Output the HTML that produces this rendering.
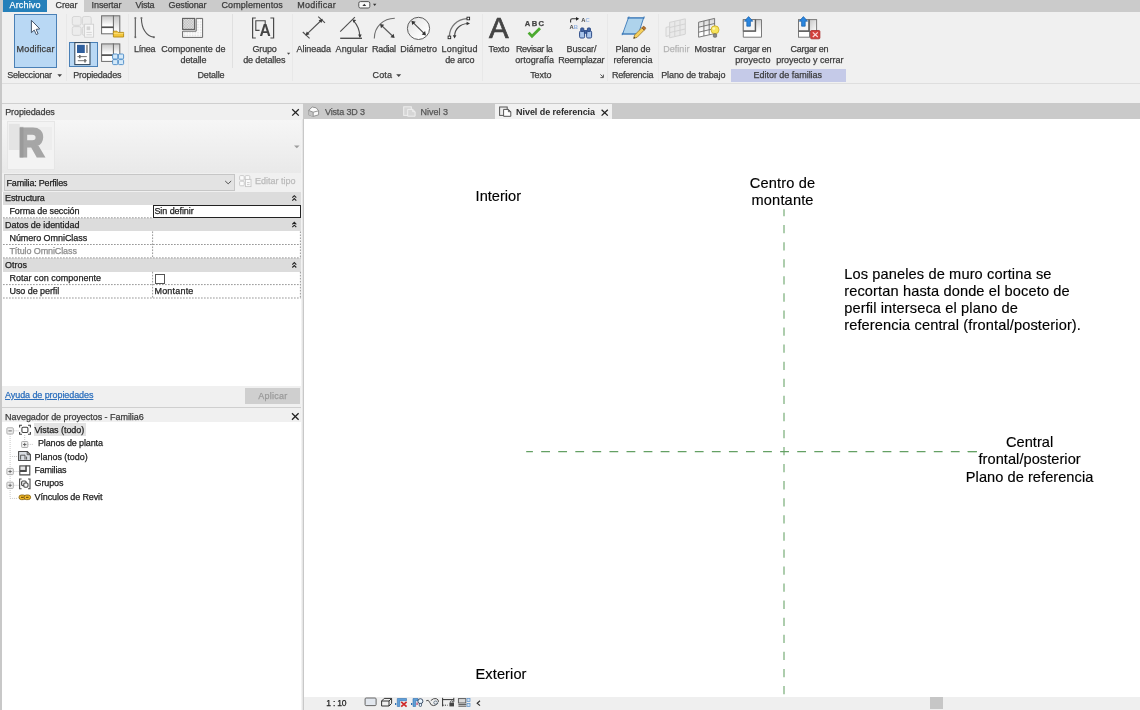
<!DOCTYPE html>
<html lang="es"><head><meta charset="utf-8"><title>Revit - Nivel de referencia</title>
<style>
html,body{margin:0;padding:0;}
body{width:1140px;height:710px;overflow:hidden;background:#f0f0f0;font-family:"Liberation Sans",sans-serif;font-size:9.0px;color:#3c3c3c;position:relative;}
.a{position:absolute;}
.t{position:absolute;white-space:nowrap;line-height:11px;-webkit-text-stroke:0.25px currentColor;}
svg{position:absolute;overflow:visible;}
.cv{position:absolute;white-space:nowrap;font-size:14.6px;line-height:17.15px;color:#000;-webkit-text-stroke:.15px #000;transform:translateY(.4px);font-family:"Liberation Sans",sans-serif;}
.dash{position:absolute;border-top:1px dashed #bbb;height:0;}
</style></head><body><div id="root" style="position:absolute;left:0;top:0;width:1140px;height:710px;will-change:transform;">
<!-- menu bar -->
<div class="a" style="left:0;top:0;width:1140px;height:12px;background:#cbcbcb;"></div>
<div class="a" style="left:3px;top:0;width:44.4px;height:11.6px;background:#2580ba;"></div>
<div class="a" style="left:47.4px;top:0;width:36.6px;height:12px;background:#f0f0f0;"></div>
<!-- ribbon -->
<div class="a" style="left:0;top:12px;width:1140px;height:71px;background:#f0f0f0;"></div>
<div class="a" style="left:0;top:82.600px;width:1140px;height:1px;background:#dedede;"></div>
<div class="a" style="left:0;top:84px;width:1140px;height:19px;background:#f0f0f0;"></div>
<div class="a" style="left:0;top:102.6px;width:1140px;height:1.2px;background:#cfcfcf;"></div>
<!-- ribbon separators -->
<div class="a" style="left:66px;top:14px;width:1px;height:67px;background:#e8e8e8;"></div>
<div class="a" style="left:128px;top:14px;width:1px;height:67px;background:#e8e8e8;"></div>
<div class="a" style="left:231.5px;top:14px;width:1px;height:54px;background:#e0e0e0;"></div>
<div class="a" style="left:292.4px;top:14px;width:1px;height:67px;background:#e8e8e8;"></div>
<div class="a" style="left:482.4px;top:14px;width:1px;height:67px;background:#e8e8e8;"></div>
<div class="a" style="left:607px;top:14px;width:1px;height:67px;background:#e8e8e8;"></div>
<div class="a" style="left:657.6px;top:14px;width:1px;height:67px;background:#e8e8e8;"></div>
<!-- modificar button -->
<div class="a" style="left:14px;top:14px;width:43px;height:53.6px;box-sizing:border-box;background:#b9d8f4;border:1px solid #4a80b6;"></div>
<div class="a" style="left:69px;top:41.6px;width:29px;height:25px;box-sizing:border-box;background:#b9d8f4;border:1px solid #4a80b6;"></div>
<div class="a" style="left:730.6px;top:68.6px;width:115px;height:13px;background:#c5cae8;"></div>
<!-- left strip -->
<div class="a" style="left:0;top:12px;width:2.4px;height:698px;background:#c8c8c8;"></div>
<!-- properties palette -->
<div class="a" style="left:2.4px;top:104px;width:300px;height:16px;background:#f0f0f0;"></div>
<div class="a" style="left:2.4px;top:119.6px;width:300px;height:53px;background:linear-gradient(#f6f6f6,#e9e9e9);"></div>
<div class="a" style="left:6.6px;top:121px;width:48.4px;height:49px;box-sizing:border-box;background:#f3f3f3;border:1px solid #e6e6e6;"></div>
<div class="a" style="left:2.4px;top:172.6px;width:300px;height:19px;background:#f0f0f0;"></div>
<div class="a" style="left:4px;top:174px;width:230.700px;height:16.600px;box-sizing:border-box;background:#e3e3e3;border:1px solid #c6c6c6;"></div>
<div class="a" style="left:2.4px;top:191.5px;width:300px;height:194.3px;background:#fff;"></div>
<div class="a" style="left:3px;top:191.5px;width:297.7px;height:13px;background:#dcdcdc;"></div>
<div class="a" style="left:3px;top:218px;width:297.7px;height:13.3px;background:#dcdcdc;"></div>
<div class="a" style="left:3px;top:258.4px;width:297.7px;height:13.3px;background:#dcdcdc;"></div>
<div class="a" style="left:152.9px;top:205.2px;width:147.8px;height:12.6px;box-sizing:border-box;border:1.2px solid #222;background:#fff;"></div>
<div class="a" style="left:155px;top:274.4px;width:9.6px;height:9.4px;box-sizing:border-box;border:1px solid #555;background:#fff;"></div>
<div class="a" style="left:2.4px;top:385.8px;width:300px;height:21px;background:#f0f0f0;"></div>
<div class="a" style="left:245px;top:388.4px;width:55px;height:15.2px;background:#cfcfcf;"></div>
<div class="a" style="left:2.4px;top:406.5px;width:300px;height:1.2px;background:#cfcfcf;"></div>
<!-- project browser -->
<div class="a" style="left:2.4px;top:407.7px;width:300px;height:14.6px;background:#f0f0f0;"></div>
<div class="a" style="left:2.4px;top:422.3px;width:300px;height:288px;background:#fff;"></div>
<div class="a" style="left:33.5px;top:423.3px;width:52.8px;height:12.4px;background:#e3e3e3;"></div>
<!-- divider -->
<div class="a" style="left:300.800px;top:119.200px;width:3.300px;height:591px;background:linear-gradient(90deg,#ffffff 0,#eeeeee 22%,#e2e2e2 62%,#c9c9c9 70%,#c7c7c7 100%);"></div>
<div class="a" style="left:302.600px;top:104px;width:1.500px;height:16px;background:#c8c8c8;"></div>
<!-- tab bar -->
<div class="a" style="left:303px;top:102.800px;width:837px;height:16.400px;background:#cacaca;"></div>
<div class="a" style="left:495.300px;top:104.100px;width:116.700px;height:15.100px;background:#f1f1f1;"></div>
<!-- canvas -->
<div class="a" style="left:304px;top:119.2px;width:836px;height:578px;background:#fff;"></div>
<div class="a" style="left:305px;top:696.600px;width:835px;height:14px;background:#efefef;"></div>
<div class="a" style="left:930.2px;top:697px;width:13.2px;height:11.6px;background:#c6c6c6;"></div>
<svg style="left:0;top:0;" width="1140" height="710" viewBox="0 0 1140 710">
 <g stroke="#64a064" stroke-width="1.050" fill="none">
  <path d="M784 209.300V696.600" stroke-dasharray="8.300 8.770" stroke-dashoffset="1.300"/>
  <path d="M526.200 451.600H977" stroke-dasharray="8.800 8.270" stroke-dashoffset="2.100"/>
  <path d="M967.500 451.600H977"/>
 </g>
</svg>
<div class="cv" style="left:475.600px;top:188.200px;">Interior</div>
<div class="cv" style="left:475.500px;top:665.500px;letter-spacing:.1px;">Exterior</div>
<div class="cv" style="left:732.600px;top:175.200px;width:100px;text-align:center;letter-spacing:.16px;">Centro de<br>montante</div>
<div class="cv" style="left:844.200px;top:265.500px;letter-spacing:.125px;">Los paneles de muro cortina se<br>recortan hasta donde el boceto de<br>perfil interseca el plano de<br>referencia central (frontal/posterior).</div>
<div class="cv" style="left:939.600px;top:434.300px;width:180px;text-align:center;letter-spacing:.05px;">Central<br>frontal/posterior<br>Plano de referencia</div>
<svg style="left:0;top:0;" width="1140" height="710" viewBox="0 0 1140 710" font-family="Liberation Sans, sans-serif">
<defs>
 <linearGradient id="gw" x1="0" y1="0" x2="0" y2="1"><stop offset="0" stop-color="#c6c6c6"/><stop offset=".85" stop-color="#fdfdfd"/></linearGradient>
 <linearGradient id="gw2" x1="0" y1="0" x2="1" y2="1"><stop offset="0" stop-color="#e0e0e0"/><stop offset=".8" stop-color="#ffffff"/></linearGradient>
 <linearGradient id="gb" x1="0" y1="0" x2="0" y2="1"><stop offset="0" stop-color="#3c8ee6"/><stop offset="1" stop-color="#1668c4"/></linearGradient>
 <pattern id="hatch" width="1.6" height="1.6" patternUnits="userSpaceOnUse"><rect width="1.6" height="1.6" fill="#ececec"/><rect width=".8" height=".8" fill="#b4b4b4"/><rect x=".8" y=".8" width=".8" height=".8" fill="#b4b4b4"/></pattern>
 <pattern id="dots" width="1.6" height="1.6" patternUnits="userSpaceOnUse"><rect width="1.6" height="1.6" fill="#fbfbfb"/><rect width=".8" height=".8" fill="#dedede"/></pattern>
</defs>
<!-- cursor -->
<path d="M31.4 20.3V32.7L34.2 30.1L36.3 34.6L38.1 33.7L36.1 29.4L39.8 28.9Z" fill="#fff" stroke="#44546a" stroke-width="1" stroke-linejoin="round"/>
<!-- select arrow -->
<path d="M57.4 74.3h4.6l-2.3 2.6z" fill="#444"/>
<path d="M396.2 74.3h5l-2.5 2.6z" fill="#444"/>
<path d="M287 52.8h3.2l-1.6 1.9z" fill="#444"/>
<!-- icon A greyed family types -->
<g fill="#ececec" stroke="#d2d2d2" stroke-width=".9">
 <rect x="72.3" y="16.5" width="8.8" height="8.8" rx="1.8"/><rect x="82.4" y="16.5" width="8.8" height="8.8" rx="1.8"/>
 <rect x="72.3" y="26.6" width="8.8" height="8.8" rx="1.8"/><rect x="82.4" y="26.6" width="8.8" height="8.8" rx="1.8"/>
 <rect x="84.6" y="24.2" width="9" height="13" fill="#f6f6f6" stroke="#cfcfcf"/>
 <rect x="86.6" y="26.4" width="3.6" height="3.8" fill="#d4d4d4" stroke="none"/>
 <path d="M86.4 32.4h5.4M86.4 34.8h5.4" stroke="#d0d0d0"/>
</g>
<!-- icon B family category -->
<g stroke="#6c6c6c" stroke-width="1">
 <rect x="113.2" y="15.8" width="6.6" height="18" fill="url(#gw)"/>
 <rect x="101.6" y="27.2" width="11.8" height="6.6" fill="#fff"/>
 <rect x="101.6" y="15.8" width="11.8" height="11.2" fill="url(#gw)"/>
 <path d="M101.6 27.4h11.8" stroke="#505050" stroke-width="1.400"/>
</g>
<path d="M113.4 31.2h3.6l1 1.2h5.6v4.6h-10.2z" fill="#f3c63b" stroke="#b48a12" stroke-width=".9" stroke-linejoin="round"/>
<path d="M113.6 33.4h9.8" stroke="#fbe38c" stroke-width=".8"/>
<!-- properties icon -->
<rect x="74.8" y="42.6" width="15.2" height="22" fill="#fff" stroke="#34495e" stroke-width="1.1"/>
<rect x="77" y="44.8" width="7.8" height="8.2" fill="#2f5f9e"/>
<rect x="86" y="44.8" width="1.9" height="8.2" fill="#9a9a9a"/>
<path d="M77.400 56.600h9.400M77.800 60.700h9" stroke="#666" stroke-width=".9"/>
<path d="M79.800 55v3.200M85 59v3.400" stroke="#666" stroke-width="1.500" fill="none"/>
<!-- icon D family types -->
<g stroke="#6c6c6c" stroke-width="1">
 <rect x="113.2" y="43.9" width="6.6" height="11" fill="url(#gw)"/>
 <rect x="101.6" y="55" width="11.8" height="6.4" fill="#fff"/>
 <rect x="101.6" y="43.9" width="11.8" height="11" fill="url(#gw)"/>
 <path d="M101.6 55.2h11.8" stroke="#505050" stroke-width="1.400"/>
</g>
<g fill="#d4e9f9" stroke="#4a8ac6" stroke-width=".9">
 <rect x="112.6" y="54" width="5.2" height="5" rx="1"/><rect x="118.4" y="54" width="5.2" height="5" rx="1"/>
 <rect x="112.6" y="59.6" width="5.2" height="5" rx="1"/><rect x="118.4" y="59.6" width="5.2" height="5" rx="1"/>
</g>
<!-- Linea -->
<g stroke="#555" stroke-width="1.1" fill="none">
 <path d="M135.3 18.4V37"/>
 <path d="M141.4 18.4C141.6 28 146 36.4 153.6 37.1"/>
</g>
<g fill="#666"><rect x="134.5" y="17.2" width="1.7" height="1.7"/><rect x="134.5" y="36.4" width="1.7" height="1.7"/><rect x="140.6" y="17.2" width="1.7" height="1.7"/><rect x="153" y="36.3" width="1.8" height="1.8"/></g>
<!-- Componente de detalle -->
<path d="M196.200 18.400h6.400v19h-20v-6.200h13.600z" fill="url(#dots)" stroke="#686868" stroke-width="1"/>
<rect x="182.600" y="18.400" width="12" height="11" fill="url(#hatch)" stroke="#5e5e5e" stroke-width="1.100"/>
<!-- Grupo de detalles -->
<g stroke="#4a4a4a" stroke-width="1.2" fill="none">
 <path d="M255.8 18h-3.2v20h3.2"/>
 <path d="M270.4 18h3.2v20h-3.2"/>
 <path d="M259.6 30.4h-3.8v-9.7h9.4v3.6" stroke-width="1.1"/>
</g>
<text x="259.4" y="35.8" font-size="15.6" font-weight="bold" fill="#444">A</text>
<!-- Alineada -->
<g stroke="#4f4f4f" stroke-width="1.1" fill="none">
 <path d="M306.6 34.4L321.6 20"/>
 <path d="M302.8 32l6.8 6.4M318.2 16.6l6.8 6.2"/>
</g>
<path d="M305.4 35.6l4.2-1.4-2.8-2.8zM322.8 18.8l-4.2 1.4 2.8 2.8z" fill="#3c3c3c"/>
<!-- Angular -->
<g stroke="#4f4f4f" fill="none">
 <path d="M340.2 38.3H362" stroke-width="1.4"/>
 <path d="M340.2 31.6L354.9 17.2" stroke-width="1.1"/>
 <path d="M353.4 20.6C357.6 25 359.8 31 359.9 37" stroke-width="1.1"/>
</g>
<path d="M352.4 19.4l3.8.6-2.6 2.8zM359.9 38l-1.8-3.6h3.6z" fill="#3c3c3c"/>
<!-- Radial -->
<g stroke="#5a5a5a" fill="none" stroke-width="1.1">
 <path d="M374.3 38.4C374.3 27 383 18.4 394.8 18.2" stroke="#6e6e6e"/>
 <path d="M381 25L393.6 37"/>
</g>
<path d="M380 24l4.2.8-3.2 3.4zM394.6 38l-4.2-.8 3.2-3.4z" fill="#3c3c3c"/>
<!-- Diametro -->
<circle cx="418.500" cy="28.400" r="11.100" fill="url(#gw2)" stroke="#5c5c5c" stroke-width="1"/>
<path d="M412.4 21.8L424.8 34.2" stroke="#444" stroke-width="1.1"/>
<path d="M411.4 20.8l4.3.9-3.4 3.4zM426 35.4l-4.3-.9 3.4-3.4z" fill="#333"/>
<!-- Longitud de arco -->
<g fill="none" stroke-width="1.1">
 <path d="M449.400 36.200C449.600 26.600 457 19 467.200 18.600" stroke="#777" stroke-width="1.300"/>
 <path d="M454.6 35.6C455 29 460 24 467.6 23.5" stroke="#4a4a4a"/>
</g>
<path d="M454.6 38.6l-1.8-3.4h3.6zM470 23.5l-3.4 1.8v-3.6z" fill="#333"/>
<rect x="448.1" y="36.1" width="2.6" height="2.6" fill="#fff" stroke="#222" stroke-width=".9"/>
<rect x="467" y="17.2" width="2.6" height="2.6" fill="#fff" stroke="#222" stroke-width=".9"/>
<!-- Texto A -->
<text x="489" y="38.300" font-size="29.400" fill="#444" stroke="#444" stroke-width=".7">A</text>
<!-- ABC check -->
<text x="524.800" y="25.900" font-size="7.600" font-weight="bold" fill="#444" stroke="#444" stroke-width=".25" letter-spacing="1.400">ABC</text>
<path d="M528.6 32.6l3.4 3.6L540 28.2" fill="none" stroke="#4caa30" stroke-width="2.8" stroke-linejoin="miter"/>
<!-- Buscar/Reemplazar -->
<path d="M570.6 22.6V20.4q0-1.6 1.6-1.6h4.6" fill="none" stroke="#333" stroke-width="1.1"/>
<path d="M579.2 18.8l-3.2-1.9v3.8z" fill="#222"/>
<text x="581.2" y="22.1" font-size="5.8" font-weight="bold" fill="#444">A<tspan fill="#9ab8e4">C</tspan></text>
<text x="569.6" y="28.7" font-size="5.8" font-weight="bold" fill="#444">A<tspan fill="#8fb0e0">B</tspan></text>
<g stroke="#2c4a86" stroke-width="1" fill="#a8c4ea">
 <rect x="579.6" y="31" width="5" height="7" rx="1.2"/><rect x="586.6" y="31" width="5" height="7" rx="1.2"/>
 <rect x="580.8" y="28" width="3" height="3.4" rx=".6" fill="#4468a8"/><rect x="587.4" y="28" width="3" height="3.4" rx=".6" fill="#4468a8"/>
 <rect x="584.4" y="30.6" width="2.4" height="2.6" fill="#4468a8"/>
</g>
<!-- dialog launcher -->
<path d="M600.4 74.4l2.4 2.4M603.4 74.6v3h-3" fill="none" stroke="#444" stroke-width=".9"/>
<!-- Plano de referencia -->
<path d="M628.400 17.900H643.600L638.400 34H622.600Z" fill="#aed3ec" stroke="#3a78b8" stroke-width=".9"/>
<path d="M627.2 17.9h17.4M621.6 34h17.6M629 16.4l-.8 2.6M644.2 16.4l-.8 2.6M623 32.6l-.8 2.6" stroke="#3a78b8" stroke-width=".9" fill="none"/>
<path d="M633.6 38.4l1-3.4 7.2-7.2 2.4 2.4-7.2 7.2z" fill="#f6d05c" stroke="#8a6a28" stroke-width=".7" stroke-linejoin="round"/>
<path d="M641.8 27.8l1.2-1.2q.8-.6 1.6.2l.8.8q.6.8 0 1.400l-1.200 1.200z" fill="#b5722c" stroke="#7a4a18" stroke-width=".6"/>
<path d="M633.600 38.400l.5-1.700 1.200 1.200z" fill="#333"/>
</svg>

<svg style="left:0;top:0;" width="1140" height="710" viewBox="0 0 1140 710" font-family="Liberation Sans, sans-serif">
<!-- Definir (greyed) -->
<g stroke="#d0d0d0" stroke-width=".9" fill="#e9e9e9">
 <path d="M669.6 22.4L685.300 18.800V34.200L669.600 37.800Z"/>
 <path d="M669.6 27.500l15.700-3.600M669.600 32.600l15.700-3.600M674.800 21.200v15.400M680 20v15.400" fill="none"/>
 <path d="M666 27.400l3.600-.8v9l-3.600.8z" fill="#ededed"/>
</g>
<!-- Mostrar -->
<defs><linearGradient id="gm" x1="0" y1="0" x2="0" y2="1"><stop offset="0" stop-color="#d6d6d6"/><stop offset=".8" stop-color="#ffffff"/></linearGradient></defs>
<g stroke="#666" stroke-width=".85" fill="url(#gm)">
 <path d="M698.600 22.200L714.600 18.400V33.600L698.600 37.200Z"/>
 <path d="M698.600 27.200l16-3.700M698.600 32.200l16-3.700M703.900 21v15M709.200 19.700v15" fill="none"/>
</g>
<circle cx="715" cy="29.800" r="4" fill="#f7e45a" stroke="#c9a820" stroke-width=".8"/>
<circle cx="713.800" cy="28.600" r="1.400" fill="#fdf6b0"/>
<rect x="713.400" y="33.800" width="3.200" height="3.400" rx=".6" fill="#8a8a8a" stroke="#555" stroke-width=".6"/>
<!-- Cargar en proyecto -->
<defs><linearGradient id="gl" x1="0" y1="0" x2="1" y2="1"><stop offset="0" stop-color="#c4c4c4"/><stop offset="1" stop-color="#ffffff"/></linearGradient></defs>
<defs><linearGradient id="gl2" x1="0" y1="0" x2="0" y2="1"><stop offset="0" stop-color="#cdcdcd"/><stop offset=".7" stop-color="#ffffff"/></linearGradient></defs>
<path d="M743.300 19.600H761.500V37.200H743.300Z" fill="url(#gl2)" stroke="#7a7a7a" stroke-width="1"/>
<rect x="743.300" y="19.600" width="12" height="11.400" fill="#f4f4f4" stroke="#777" stroke-width="1"/>
<path d="M743.300 31.200h12.200V19.600" stroke="#5a5a5a" stroke-width="1.300" fill="none"/>
<path d="M748.600 16.600l4.200 4.600h-2.400v5h-3.600v-5h-2.400z" fill="#2a86e0" stroke="#145ca8" stroke-width=".7" stroke-linejoin="round"/>
<!-- Cargar y cerrar -->
<rect x="808.800" y="19.600" width="7.800" height="12" fill="url(#gl)" stroke="#7a7a7a" stroke-width="1"/>
<rect x="798.500" y="31.200" width="11" height="6" fill="#fff" stroke="#7a7a7a" stroke-width="1"/>
<rect x="798.500" y="19.600" width="10.400" height="11.400" fill="#f4f4f4" stroke="#777" stroke-width="1"/>
<path d="M798.500 31.200h10.600V19.600" stroke="#5a5a5a" stroke-width="1.300" fill="none"/>
<path d="M803.400 16.600l4.200 4.600h-2.400v5h-3.600v-5h-2.400z" fill="#2a86e0" stroke="#145ca8" stroke-width=".7" stroke-linejoin="round"/>
<rect x="810.600" y="30.500" width="9.300" height="8.300" rx="1" fill="#d4403c" stroke="#a82a2a" stroke-width=".8"/>
<path d="M812.800 32.400l5 4.600M817.800 32.400l-5 4.600" stroke="#fbdada" stroke-width="1.200"/>
<!-- property grid dashes -->
<g stroke="#999" stroke-width="1" stroke-dasharray="1.700 1.300" fill="none">
 <path d="M3 217.800H152.900M3 244.500H300.700M3 257.900H300.700M3 284.600H300.700M3 298H300.700"/>
 <path d="M152.600 231.400V257.900M152.600 271.800V298M300.400 231.400V257.900M300.400 271.800V298"/>
</g>
<!-- Properties header close -->
<path d="M292.200 109.200l6.600 6.400M298.800 109.200l-6.600 6.400" stroke="#222" stroke-width="1.300"/>
<path d="M292 413.300l6.600 6.400M298.600 413.300l-6.600 6.400" stroke="#222" stroke-width="1.300"/>
<path d="M294 145.500h5.600l-2.800 2.800z" fill="#9c9c9c"/>
<!-- Revit R -->
<path d="M8.800 123.800H19.800V150H8.800Z" fill="#e4e4e4"/>
<path d="M19.800 127H52V150H19.800Z" fill="#ededed"/>
<text transform="translate(18.400 156.400) scale(.9 1)" font-size="39" font-weight="bold" fill="#a6a6a6" stroke="#a6a6a6" stroke-width="2.800" stroke-linejoin="miter">R</text>
<path d="M19.800 126.800h3.600V157.600h-3.600z" fill="#8e8e8e" opacity=".5"/>
<!-- dropdown chevron -->
<path d="M225.200 181l3 2.800 3-2.800" fill="none" stroke="#505050" stroke-width="1"/>
<!-- edit type icon -->
<g fill="#fbfbfb" stroke="#c6c6c6" stroke-width=".9">
 <rect x="239.600" y="175.600" width="4.600" height="4.600" rx="1"/><rect x="245.200" y="175.600" width="4.600" height="4.600" rx="1"/>
 <rect x="239.600" y="181.200" width="4.600" height="4.600" rx="1"/>
 <rect x="245.400" y="179.400" width="5.600" height="7.200"/>
 <path d="M247 182.600h2.600M247 184.600h2.600" fill="none"/>
</g>
<!-- group collapse chevrons -->
<g fill="none" stroke="#222" stroke-width="1.100">
 <path d="M292.300 197.700l2-2 2 2M292.300 200.600l2-2 2 2"/>
 <path d="M292.300 224.300l2-2 2 2M292.300 227.200l2-2 2 2"/>
 <path d="M292.300 264.600l2-2 2 2M292.300 267.500l2-2 2 2"/>
</g>
<!-- tree lines -->
<g stroke="#c8c8c8" stroke-width="1" stroke-dasharray="1 1" fill="none">
 <path d="M10.100 434V498.400"/>
 <path d="M13.600 430.800h5M10.100 456.500h8M13.600 471.500h5M13.600 485.300h5M10.100 498.400h8"/>
 <path d="M24.700 435v6.600M27.800 444.400h6"/>
</g>
<g fill="#f0f0f0" stroke="#a6a6a6" stroke-width=".9">
 <rect x="6.900" y="427.800" width="6.400" height="6.200" rx=".8"/>
 <rect x="21.600" y="441.500" width="6.200" height="6" rx=".8"/>
 <rect x="6.900" y="468.400" width="6.400" height="6.200" rx=".8"/>
 <rect x="6.900" y="482.200" width="6.400" height="6.200" rx=".8"/>
</g>
<g stroke="#5e5e5e" stroke-width=".9" fill="none">
 <path d="M8.400 430.900h3.400"/>
 <path d="M23 444.500h3.400M24.700 442.800v3.400"/>
 <path d="M8.400 471.500h3.400M10.100 469.800v3.400"/>
 <path d="M8.400 485.300h3.400M10.100 483.600v3.400"/>
</g>
<!-- views icon -->
<g stroke="#444" stroke-width="1.100" fill="none">
 <path d="M19.600 427.400v-2.200h2.400M28 425.200h2.400v2.200M30.400 432v2.200h-2.400M22 434.200h-2.400v-2.200"/>
 <rect x="21.900" y="427.300" width="6" height="5.200" rx="1.200"/>
</g>
<!-- sheets icon -->
<path d="M18.600 451.500h8.600l3.200 3.200v5.800h-11.800z" fill="#d9dde2" stroke="#4a4a4a" stroke-width="1.100" stroke-linejoin="round"/>
<path d="M27.200 451.500v3.200h3.200" fill="none" stroke="#4a4a4a" stroke-width=".9"/>
<path d="M20.600 459.600v-4.400h4.400v4.400M26.600 459.600v-3" fill="none" stroke="#4a4a4a" stroke-width=".9"/>
<!-- families icon -->
<g stroke="#4a4a4a" stroke-width="1.100" fill="#fff">
 <path d="M26.200 465.900h3.600v9h-10v-3.400h6.400z"/>
 <rect x="19.800" y="465.900" width="6" height="4.600" fill="#e4e4e4"/>
</g>
<!-- groups icon -->
<g stroke="#4a4a4a" stroke-width="1.100" fill="none">
 <path d="M21.600 479h-2v9.800h2M28 479h2v9.800h-2"/>
 <rect x="21.600" y="481" width="4.600" height="4.600" rx="1.200" fill="#e8e8e8"/>
 <rect x="23.800" y="483" width="4.200" height="4.200" rx="1.200" fill="#f6f6f6"/>
</g>
<!-- link icon -->
<g stroke="#8a6410" stroke-width=".9" fill="#f2b826">
 <rect x="19" y="495" width="6.600" height="4.600" rx="2.300"/><rect x="24" y="495" width="6.600" height="4.600" rx="2.300"/>
</g>
<path d="M21 497.300h2.600M26 497.300h2.600" stroke="#5a4008" stroke-width="1"/>
<!-- tab icons -->
<path d="M308.600 110.400l3.600-3.400 4 .8 2.400 3v4l-5.400 1.600-4.600-1.600z" fill="#fafafa" stroke="#8a8a8a" stroke-width=".9" stroke-linejoin="round"/>
<path d="M308.600 110.400l4.600 1.800v4.200l-4.600-1.600z" fill="#c4c4c4" stroke="none"/>
<path d="M308.600 110.400l4.600 1.800 5.400-1.400M313.200 112.200v4.200" fill="none" stroke="#8a8a8a" stroke-width=".9"/>
<g fill="#d6d6d6" stroke="#efefef" stroke-width="1">
 <rect x="403.700" y="106.800" width="7.600" height="8.600"/>
 <path d="M407.700 109.400h5l2.400 2.300v4.500h-7.400z"/>
 <path d="M412.700 109.400v2.300h2.400" fill="none"/>
</g>
<g fill="#fff" stroke="#555" stroke-width="1">
 <rect x="499.600" y="107" width="7.600" height="8.400" fill="#ececec"/>
 <path d="M503.600 109.400h4.800l2.400 2.300v4.600h-7.200z"/>
 <path d="M508.400 109.400v2.300h2.400" fill="none"/>
</g>
<path d="M601.600 109.800l6.200 5.800M607.800 109.800l-6.200 5.800" stroke="#222" stroke-width="1.300"/>
<!-- view control bar icons -->
<rect x="365.100" y="698" width="11" height="7.600" rx="1" fill="#e2e7ee" stroke="#666" stroke-width="1"/>
<g fill="none" stroke="#333" stroke-width="1">
 <path d="M381.600 701h7.400v5h-7.400zM381.600 701l2.600-2.600h7.400l-2.600 2.600M391.600 698.400v5l-2.600 2.600"/>
</g>
<path d="M397.300 706.500v-8h9.200v2.200h-6.800v5.800z" fill="#5f9fd8" stroke="#2f6fb0" stroke-width=".6"/>
<rect x="395" y="703" width="1.300" height="2" fill="#2f6fb0"/>
<path d="M401.200 701.800l5.400 4.800M406.600 701.800l-5.400 4.800" stroke="#cf2a2a" stroke-width="1.700"/>
<path d="M413 706.500v-8h5v2.200h-2.400v5.800z" fill="#5f9fd8" stroke="#2f6fb0" stroke-width=".6"/>
<rect x="411" y="703" width="1.300" height="2" fill="#2f6fb0"/>
<rect x="416.300" y="702.600" width="1.600" height="2.400" fill="#c86a8a"/>
<circle cx="420.400" cy="701.200" r="2.500" fill="#eaf6ff" stroke="#2a3f5a" stroke-width=".9"/>
<rect x="419.300" y="703.400" width="2.200" height="3" rx=".8" fill="#eaf6ff" stroke="#2a3f5a" stroke-width=".8"/>
<g fill="none" stroke-width="1">
 <path d="M426.200 700.800q2.200-1.800 3.400 1.400 1.200 3.600 4 3.400 2.800-.4 4.600-2.600" stroke="#4a4a4a"/>
 <path d="M430.800 700.600q2.400-2.600 5.400-2 2.400.8 2.400 3.200" stroke="#4a4a4a"/>
 <ellipse cx="435.600" cy="702.600" rx="1.800" ry="1.600" stroke="#6a7a8a"/>
</g>
<g fill="none" stroke="#333" stroke-width="1">
 <path d="M442.600 697.800v8.600M442.600 699.600h11.200M453.800 697.800v4" />
 <path d="M442.600 705.200h5" stroke-dasharray="1.200 1"/>
</g>
<rect x="449.400" y="702.600" width="4.600" height="3.800" fill="#444"/>
<path d="M450.400 702.600v-1q1.300-1.600 2.600 0v1" fill="none" stroke="#444" stroke-width=".9"/>
<g>
 <rect x="458.400" y="698.600" width="7.400" height="4.400" fill="#d8d8d8" stroke="#555" stroke-width=".9"/>
 <path d="M458.400 704.600h8M458.400 706.200h8" stroke="#555" stroke-width="1"/>
 <rect x="467" y="698.600" width="3" height="3" fill="#cfe2f4" stroke="#5a90c8" stroke-width=".7"/>
 <rect x="467" y="703.400" width="3" height="3" fill="#cfe2f4" stroke="#5a90c8" stroke-width=".7"/>
</g>
<path d="M480 700.800l-2.800 2.400 2.800 2.400" fill="none" stroke="#333" stroke-width="1.200"/>
<!-- menubar extra icon -->
<rect x="358.800" y="1.600" width="11" height="6.400" rx="1.600" fill="#fafafa" stroke="#444" stroke-width=".9"/>
<path d="M362.400 5.900h3.800l-1.900-2.200z" fill="#333"/>
<path d="M373 3.800h3.400l-1.700 2.200z" fill="#333"/>
</svg>

<div class="t" style="left:9.55px;top:0.00px;letter-spacing:0.147px;color:#fff;">Archivo</div>
<div class="t" style="left:55.55px;top:0.00px;letter-spacing:-0.154px;">Crear</div>
<div class="t" style="left:91.55px;top:0.00px;letter-spacing:-0.088px;">Insertar</div>
<div class="t" style="left:135.55px;top:0.00px;letter-spacing:-0.240px;">Vista</div>
<div class="t" style="left:168.55px;top:0.00px;letter-spacing:-0.141px;">Gestionar</div>
<div class="t" style="left:221.55px;top:0.00px;letter-spacing:0.070px;">Complementos</div>
<div class="t" style="left:297.15px;top:0.00px;letter-spacing:0.273px;">Modificar</div>
<div class="t" style="left:16.55px;top:44.00px;letter-spacing:0.173px;">Modificar</div>
<div class="t" style="left:7.15px;top:70.00px;letter-spacing:-0.213px;">Seleccionar</div>
<div class="t" style="left:73.15px;top:70.00px;letter-spacing:-0.225px;">Propiedades</div>
<div class="t" style="left:133.95px;top:44.00px;letter-spacing:-0.258px;">Línea</div>
<div class="t" style="left:161.15px;top:44.00px;letter-spacing:0.021px;">Componente de</div>
<div class="t" style="left:180.55px;top:55.00px;letter-spacing:-0.105px;">detalle</div>
<div class="t" style="left:197.55px;top:70.00px;letter-spacing:-0.186px;">Detalle</div>
<div class="t" style="left:252.55px;top:44.00px;letter-spacing:-0.179px;">Grupo</div>
<div class="t" style="left:243.15px;top:55.00px;letter-spacing:-0.125px;">de detalles</div>
<div class="t" style="left:296.55px;top:44.00px;letter-spacing:-0.076px;">Alineada</div>
<div class="t" style="left:335.55px;top:44.00px;letter-spacing:0.145px;">Angular</div>
<div class="t" style="left:371.95px;top:44.00px;letter-spacing:-0.283px;">Radial</div>
<div class="t" style="left:400.15px;top:44.00px;letter-spacing:0.055px;">Diámetro</div>
<div class="t" style="left:372.55px;top:70.00px;letter-spacing:0.161px;">Cota</div>
<div class="t" style="left:441.55px;top:44.00px;letter-spacing:0.193px;">Longitud</div>
<div class="t" style="left:445.15px;top:55.00px;letter-spacing:-0.122px;">de arco</div>
<div class="t" style="left:488.55px;top:44.00px;letter-spacing:-0.154px;">Texto</div>
<div class="t" style="left:515.95px;top:44.00px;letter-spacing:-0.346px;">Revisar la</div>
<div class="t" style="left:515.15px;top:55.00px;letter-spacing:0.041px;">ortografía</div>
<div class="t" style="left:566.55px;top:44.00px;letter-spacing:-0.103px;">Buscar/</div>
<div class="t" style="left:558.15px;top:55.00px;letter-spacing:-0.248px;">Reemplazar</div>
<div class="t" style="left:530.15px;top:70.00px;letter-spacing:-0.054px;">Texto</div>
<div class="t" style="left:615.55px;top:44.00px;letter-spacing:-0.090px;">Plano de</div>
<div class="t" style="left:613.55px;top:55.00px;letter-spacing:-0.126px;">referencia</div>
<div class="t" style="left:611.95px;top:70.00px;letter-spacing:-0.226px;">Referencia</div>
<div class="t" style="left:663.15px;top:44.00px;letter-spacing:0.047px;color:#b4b4b4;">Definir</div>
<div class="t" style="left:694.55px;top:44.00px;letter-spacing:0.064px;">Mostrar</div>
<div class="t" style="left:733.55px;top:44.00px;letter-spacing:-0.266px;">Cargar en</div>
<div class="t" style="left:735.15px;top:55.00px;letter-spacing:0.110px;">proyecto</div>
<div class="t" style="left:790.55px;top:44.00px;letter-spacing:-0.266px;">Cargar en</div>
<div class="t" style="left:776.15px;top:55.00px;letter-spacing:-0.014px;">proyecto y cerrar</div>
<div class="t" style="left:661.15px;top:70.00px;letter-spacing:-0.084px;">Plano de trabajo</div>
<div class="t" style="left:753.55px;top:70.00px;letter-spacing:-0.031px;">Editor de familias</div>
<div class="t" style="left:5.15px;top:107.00px;letter-spacing:-0.085px;">Propiedades</div>
<div class="t" style="left:6.55px;top:178.00px;letter-spacing:-0.195px;color:#222;">Familia: Perfiles</div>
<div class="t" style="left:254.95px;top:176.00px;letter-spacing:0.017px;color:#bababa;">Editar tipo</div>
<div class="t" style="left:5.05px;top:193.00px;letter-spacing:-0.135px;color:#222;">Estructura</div>
<div class="t" style="left:9.45px;top:206.00px;letter-spacing:-0.102px;color:#222;">Forma de sección</div>
<div class="t" style="left:154.45px;top:206.00px;letter-spacing:-0.073px;color:#222;">Sin definir</div>
<div class="t" style="left:5.05px;top:220.00px;letter-spacing:-0.039px;color:#222;">Datos de identidad</div>
<div class="t" style="left:9.45px;top:233.00px;letter-spacing:-0.049px;color:#222;">Número OmniClass</div>
<div class="t" style="left:9.45px;top:246.00px;letter-spacing:-0.102px;color:#8c8c8c;">Título OmniClass</div>
<div class="t" style="left:5.05px;top:260.00px;letter-spacing:-0.004px;color:#222;">Otros</div>
<div class="t" style="left:9.45px;top:273.00px;letter-spacing:0.028px;color:#222;">Rotar con componente</div>
<div class="t" style="left:9.45px;top:286.00px;letter-spacing:-0.061px;color:#222;">Uso de perfil</div>
<div class="t" style="left:154.45px;top:286.00px;letter-spacing:0.196px;color:#222;">Montante</div>
<div class="t" style="left:5.05px;top:390.00px;letter-spacing:-0.080px;color:#2c6fbd;text-decoration:underline;">Ayuda de propiedades</div>
<div class="t" style="left:258.25px;top:391.00px;letter-spacing:0.231px;color:#9a9a9a;">Aplicar</div>
<div class="t" style="left:5.05px;top:412.00px;letter-spacing:-0.043px;">Navegador de proyectos - Familia6</div>
<div class="t" style="left:34.55px;top:425.00px;letter-spacing:-0.055px;color:#222;">Vistas (todo)</div>
<div class="t" style="left:37.95px;top:438.00px;letter-spacing:-0.138px;color:#222;">Planos de planta</div>
<div class="t" style="left:34.55px;top:452.00px;letter-spacing:-0.028px;color:#222;">Planos (todo)</div>
<div class="t" style="left:34.55px;top:465.00px;letter-spacing:-0.231px;color:#222;">Familias</div>
<div class="t" style="left:34.55px;top:478.00px;letter-spacing:-0.123px;color:#222;">Grupos</div>
<div class="t" style="left:34.55px;top:492.00px;letter-spacing:-0.134px;color:#222;">Vínculos de Revit</div>
<div class="t" style="left:324.95px;top:107.00px;letter-spacing:-0.151px;color:#555;">Vista 3D 3</div>
<div class="t" style="left:420.55px;top:107.00px;letter-spacing:-0.003px;color:#555;">Nivel 3</div>
<div class="t" style="left:516.05px;top:107.00px;letter-spacing:-0.058px;color:#2a2a2a;font-weight:bold;-webkit-text-stroke:0;">Nivel de referencia</div>
<div class="t" style="left:326.27px;top:698.00px;letter-spacing:-0.226px;color:#222;font-size:8.5px;">1 : 10</div>
</div></body></html>
